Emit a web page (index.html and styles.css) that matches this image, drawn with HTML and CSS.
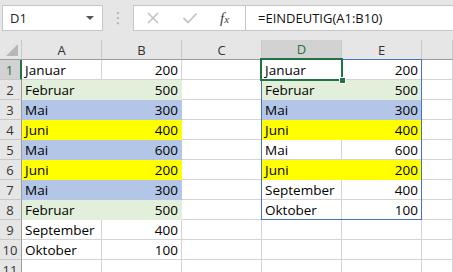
FILE: index.html
```html
<!DOCTYPE html>
<html lang="de">
<head>
    <meta charset="UTF-8">
    <title>EINDEUTIG</title>
    <link rel="stylesheet" href="styles.css">
</head>
<body>
    <div class="toolbar">
        <div class="name-box">
            <span>D1</span>
            <span class="caret"></span>
        </div>
        <div class="grip">&#8942;</div>
        <div class="formula-bar">
            <div class="fb-buttons">
                <svg class="fb-icon" width="14" height="14" viewBox="0 0 14 14">
                    <path d="M2 2 L12 12 M12 2 L2 12" stroke="#c3c3c3" stroke-width="1.6" fill="none"/>
                </svg>
                <svg class="fb-icon" width="16" height="14" viewBox="0 0 16 14">
                    <path d="M1.5 7 L6 11.5 L14.5 2.5" stroke="#c3c3c3" stroke-width="1.8" fill="none"/>
                </svg>
                <span class="fx">f<span class="fx-x">x</span></span>
            </div>
            <div class="formula">=EINDEUTIG(A1:B10)</div>
        </div>
    </div>

    <div class="sheet">
        <div class="grid">
            <div class="corner"><span class="corner-tri"></span></div>
            <div class="col-head">A</div>
            <div class="col-head">B</div>
            <div class="col-head">C</div>
            <div class="col-head active">D</div>
            <div class="col-head">E</div>
            <div class="col-head"></div>

            <div class="row-head active">1</div>
            <div class="cell">Januar</div><div class="cell num">200</div><div class="cell"></div>
            <div class="cell">Januar</div><div class="cell num">200</div><div class="cell"></div>

            <div class="row-head">2</div>
            <div class="cell green">Februar</div><div class="cell num green">500</div><div class="cell"></div>
            <div class="cell green">Februar</div><div class="cell num green">500</div><div class="cell"></div>

            <div class="row-head">3</div>
            <div class="cell blue">Mai</div><div class="cell num blue">300</div><div class="cell"></div>
            <div class="cell blue">Mai</div><div class="cell num blue">300</div><div class="cell"></div>

            <div class="row-head">4</div>
            <div class="cell yellow">Juni</div><div class="cell num yellow">400</div><div class="cell"></div>
            <div class="cell yellow">Juni</div><div class="cell num yellow">400</div><div class="cell"></div>

            <div class="row-head">5</div>
            <div class="cell blue">Mai</div><div class="cell num blue">600</div><div class="cell"></div>
            <div class="cell">Mai</div><div class="cell num">600</div><div class="cell"></div>

            <div class="row-head">6</div>
            <div class="cell yellow">Juni</div><div class="cell num yellow">200</div><div class="cell"></div>
            <div class="cell yellow">Juni</div><div class="cell num yellow">200</div><div class="cell"></div>

            <div class="row-head">7</div>
            <div class="cell blue">Mai</div><div class="cell num blue">300</div><div class="cell"></div>
            <div class="cell">September</div><div class="cell num">400</div><div class="cell"></div>

            <div class="row-head">8</div>
            <div class="cell green">Februar</div><div class="cell num green">500</div><div class="cell"></div>
            <div class="cell">Oktober</div><div class="cell num">100</div><div class="cell"></div>

            <div class="row-head">9</div>
            <div class="cell">September</div><div class="cell num">400</div><div class="cell"></div>
            <div class="cell"></div><div class="cell"></div><div class="cell"></div>

            <div class="row-head">10</div>
            <div class="cell">Oktober</div><div class="cell num">100</div><div class="cell"></div>
            <div class="cell"></div><div class="cell"></div><div class="cell"></div>

            <div class="row-head">11</div>
            <div class="cell"></div><div class="cell"></div><div class="cell"></div>
            <div class="cell"></div><div class="cell"></div><div class="cell"></div>
        </div>

        <!-- spill range D1:E8 and the active cell D1 -->
        <div class="spill"></div>
        <div class="selection"><span class="handle"></span></div>
    </div>
</body>
</html>
```

FILE: styles.css
```css
* {
    margin: 0;
    padding: 0;
    box-sizing: border-box;
}

body {
    width: 453px;
    height: 272px;
    overflow: hidden;
    background: #e6e6e6;
    font-family: 'Open Sans', 'Noto Sans', sans-serif;
    color: #000;
}

.toolbar {
    display: flex;
    align-items: center;
    height: 40px;
    padding: 0 0 6px 2px;
}

.name-box {
    display: flex;
    align-items: center;
    justify-content: space-between;
    width: 101px;
    height: 26px;
    margin-top: 2px;
    padding: 0 7px 0 7px;
    background: #fff;
    border: 1px solid #c6c6c6;
    font-size: 13px;
    color: #222;
}

.caret {
    width: 0;
    height: 0;
    border-left: 4px solid transparent;
    border-right: 4px solid transparent;
    border-top: 4px solid #555;
    margin-right: 1px;
}

.grip {
    width: 30px;
    margin-top: 2px;
    text-align: center;
    color: #a6a6a6;
    font-size: 15px;
    font-family: 'DejaVu Sans', sans-serif;
}

.formula-bar {
    display: flex;
    align-items: center;
    flex: 1;
    height: 26px;
    margin-top: 2px;
    background: #fff;
    border: 1px solid #c6c6c6;
    border-right: none;
}

.fb-buttons {
    display: flex;
    align-items: center;
    height: 100%;
    width: 112px;
    padding-left: 12px;
    border-right: 1px solid #c6c6c6;
}

.fb-icon {
    margin-right: 22px;
}

.fx {
    font-family: 'Liberation Serif', serif;
    font-style: italic;
    font-size: 15px;
    color: #444;
}

.fx-x {
    font-size: 11px;
}

.formula {
    padding-left: 12px;
    font-size: 13px;
    color: #111;
}

.sheet {
    position: relative;
}

.grid {
    display: grid;
    grid-template-columns: 22px repeat(5, 80px) 1fr;
    grid-auto-rows: 20px;
    background: #fff;
}

.corner {
    position: relative;
    background: #e6e6e6;
    border-right: 1px solid #c8c8c8;
    border-bottom: 1px solid #9b9b9b;
}

.corner-tri {
    position: absolute;
    right: 3px;
    bottom: 3px;
    width: 0;
    height: 0;
    border-left: 12px solid transparent;
    border-bottom: 12px solid #b7b7b7;
}

.col-head {
    display: flex;
    align-items: center;
    justify-content: center;
    background: #e6e6e6;
    border-right: 1px solid #c8c8c8;
    border-bottom: 1px solid #9b9b9b;
    font-size: 13px;
    color: #333;
}

.col-head.active {
    background: #d2d2d2;
    border-bottom: 2px solid #217346;
    color: #217346;
}

.row-head {
    display: flex;
    align-items: center;
    justify-content: center;
    background: #e6e6e6;
    border-right: 1px solid #9b9b9b;
    border-bottom: 1px solid #c8c8c8;
    font-size: 13px;
    color: #333;
    padding-right: 1px;
}

.row-head.active {
    background: #d2d2d2;
    border-right: 2px solid #217346;
    color: #217346;
}

.cell {
    display: flex;
    align-items: center;
    padding: 0 3px;
    border-right: 1px solid #d4d4d4;
    border-bottom: 1px solid #d4d4d4;
    font-size: 13.5px;
    white-space: nowrap;
}

.cell.num {
    justify-content: flex-end;
}

.cell.green {
    background: #e2efda;
    border-color: #e2efda;
}

.cell.blue {
    background: #b4c6e7;
    border-color: #b4c6e7;
}

.cell.yellow {
    background: #ffff00;
    border-color: #ffff00;
}

.spill {
    position: absolute;
    left: 261px;
    top: 19px;
    width: 161px;
    height: 161px;
    border: 1px solid #4472c4;
}

.selection {
    position: absolute;
    left: 260px;
    top: 18px;
    width: 83px;
    height: 23px;
    border: 2px solid #217346;
}

.handle {
    position: absolute;
    right: -5px;
    bottom: -5px;
    width: 7px;
    height: 7px;
    background: #217346;
    border: 1px solid #fff;
}
```
